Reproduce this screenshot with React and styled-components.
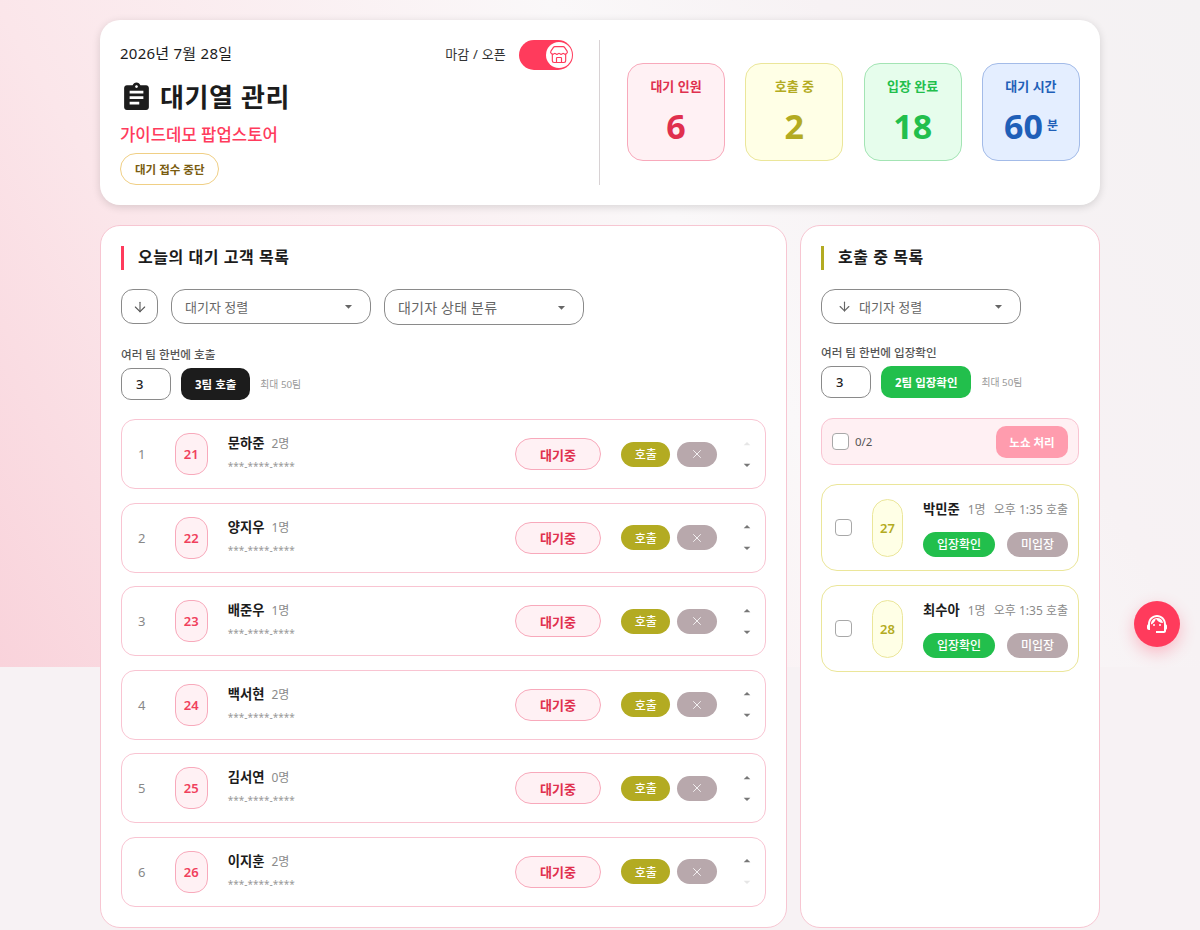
import React from "react";
import styled, { createGlobalStyle } from "styled-components";
import { ArrowDown, Store, X } from "lucide-react";
import {
  MdArrowDropDown,
  MdArrowDropUp,
  MdAssignment,
  MdSupportAgent,
} from "react-icons/md";

const tones = {
  red: { fg: "#e0304e", bg: "#fff1f4", line: "#f8a9bb" },
  yellow: { fg: "#b3ab22", bg: "#ffffe6", line: "#ebe69a" },
  green: { fg: "#22bf4c", bg: "#e6fdec", line: "#a3e4b4" },
  blue: { fg: "#1f5fb8", bg: "#e4eeff", line: "#a3bbe8" },
};

const waiting = [
  { no: 21, name: "문하준", count: 2 },
  { no: 22, name: "양지우", count: 1 },
  { no: 23, name: "배준우", count: 1 },
  { no: 24, name: "백서현", count: 2 },
  { no: 25, name: "김서연", count: 0 },
  { no: 26, name: "이지훈", count: 2 },
];

const calling = [
  { no: 27, name: "박민준", count: 1 },
  { no: 28, name: "최수아", count: 1 },
];

const GlobalStyle = createGlobalStyle`
  * {
    box-sizing: border-box;
  }
  body {
    margin: 0;
    font-family: "Noto Sans", "Noto Sans CJK KR", sans-serif;
    color: #1c1c1c;
    background:
      linear-gradient(60deg, #f9d3db 0%, #fbe6ea 24%, #faf8f9 59%, #f7f2f4 76%, #f4f2f3 100%) 0 0 / 100% 667px no-repeat,
      #f7f2f4;
  }
`;

const Page = styled.div`
  width: 1000px;
  margin: 0 auto;
  padding: 20px 0 3px;
  display: flex;
  flex-direction: column;
  gap: 20px;
`;

const Header = styled.header`
  height: 185px;
  padding: 20px;
  display: flex;
  background: #fff;
  border-radius: 20px;
  box-shadow: 0 2px 8px rgba(0, 0, 0, 0.14);
`;

const HeaderInfo = styled.div`
  width: 480px;
  padding-right: 26px;
  border-right: 1px solid #d8d2d4;
  display: flex;
  flex-direction: column;
  align-items: flex-start;
`;

const TopLine = styled.div`
  width: 100%;
  height: 30px;
  display: flex;
  align-items: center;
  justify-content: space-between;
`;

const DateText = styled.div`
  margin-bottom: 6px;
  font-size: 15px;
  letter-spacing: 0.25px;
`;

const ToggleWrap = styled.div`
  display: flex;
  align-items: center;
  gap: 13px;
  font-size: 13px;
  color: #333;
`;

const ToggleLabel = styled.span`
  margin-bottom: 4px;
  letter-spacing: 0.2px;
`;

const Toggle = styled.div`
  width: 54px;
  height: 30px;
  padding: 2px 1px;
  display: flex;
  justify-content: flex-end;
  background: #ff3b5c;
  border-radius: 15px;
`;

const Knob = styled.div`
  width: 26px;
  height: 26px;
  display: flex;
  align-items: center;
  justify-content: center;
  background: #fff;
  border-radius: 50%;
  color: #ff3b5c;
`;

const Title = styled.h1`
  margin: 8px 0 0;
  display: flex;
  align-items: center;
  gap: 7px;
  font-size: 26px;
  line-height: 38px;
  font-weight: 700;
  letter-spacing: 0.6px;
`;

const StoreName = styled.div`
  margin-top: 6px;
  font-size: 16.7px;
  line-height: 26px;
  font-weight: 500;
  color: #ff3b5c;
`;

const StopButton = styled.button`
  margin-top: 5px;
  height: 32px;
  padding: 0 14px;
  font: inherit;
  font-size: 11.5px;
  font-weight: 700;
  color: #7a5c10;
  background: #fff;
  border: 1px solid #f0cf85;
  border-radius: 16px;
`;

const Stats = styled.div`
  flex: 1;
  padding: 0 0 1px 27px;
  display: flex;
  align-items: center;
  justify-content: space-between;
`;

const StatCard = styled.div`
  width: 98px;
  height: 98px;
  padding-top: 12px;
  display: flex;
  flex-direction: column;
  align-items: center;
  background: ${(p) => tones[p.$tone].bg};
  border: 1px solid ${(p) => tones[p.$tone].line};
  border-radius: 16px;
  color: ${(p) => tones[p.$tone].fg};
`;

const StatLabel = styled.div`
  font-size: 13px;
  line-height: 20px;
  font-weight: 600;
`;

const StatValue = styled.div`
  margin-top: 8px;
  font-size: 34px;
  line-height: 44px;
  font-weight: 700;
  display: flex;
  align-items: center;
  gap: 4px;
`;

const Unit = styled.span`
  font-size: 12px;
  font-weight: 600;
`;

const Columns = styled.div`
  display: grid;
  grid-template-columns: 687px 300px;
  gap: 13px;
`;

const Panel = styled.section`
  height: 703px;
  padding: 20px;
  background: #fff;
  border: 1px solid #f7c6d2;
  border-radius: 20px;
`;

const PanelTitle = styled.h2`
  margin: 0;
  height: 24px;
  padding-left: 14px;
  border-left: 3px solid ${(p) => (p.$tone === "yellow" ? "#b3ab22" : "#ff3b5c")};
  font-size: 16px;
  line-height: 23px;
  font-weight: 600;
  letter-spacing: 0.55px;
`;

const Filters = styled.div`
  margin-top: 19px;
  display: flex;
  gap: 13px;
  align-items: flex-start;
`;

const RoundButton = styled.div`
  width: 37px;
  height: 35px;
  display: flex;
  align-items: center;
  justify-content: center;
  border: 1px solid #8a8a8a;
  border-radius: 12px;
  color: #555;
`;

const Select = styled.div`
  width: 200px;
  height: ${(p) => (p.$tall ? "36px" : "35px")};
  padding: 0 13px 0 ${(p) => (p.$icon ? "15px" : "13px")};
  display: flex;
  align-items: center;
  gap: 7px;
  border: 1px solid #8a8a8a;
  border-radius: 14px;
  font-size: ${(p) => (p.$tall ? "14px" : "13px")};
  letter-spacing: ${(p) => (p.$tall ? "0.2px" : "0")};
  color: #666;
  svg:last-child {
    margin-left: auto;
  }
`;

const BulkLabel = styled.div`
  margin-top: ${(p) => p.$top};
  font-size: 11.6px;
  line-height: 16px;
  font-weight: 500;
  color: #555;
`;

const BulkRow = styled.div`
  margin-top: 5px;
  display: flex;
  align-items: center;
  gap: 10px;
`;

const CountInput = styled.input`
  width: 50px;
  height: 32px;
  padding: 0 14px;
  font: inherit;
  font-size: 13px;
  font-weight: 500;
  color: #222;
  border: 1px solid #8a8a8a;
  border-radius: 10px;
`;

const BulkButton = styled.button`
  height: 32px;
  padding: 0 14px;
  font: inherit;
  font-size: 11.5px;
  font-weight: 700;
  color: #fff;
  background: ${(p) => (p.$green ? "#22bf4c" : "#1c1c1c")};
  border: 0;
  border-radius: 10px;
`;

const MaxText = styled.span`
  font-size: 9.8px;
  color: #999;
`;

const QueueList = styled.div`
  margin-top: 19px;
  display: flex;
  flex-direction: column;
  gap: 13.5px;
`;

const QueueRow = styled.div`
  height: 70px;
  padding: 0 8px 0 16px;
  display: flex;
  align-items: center;
  background: #fff;
  border: 1px solid #f9c4d2;
  border-radius: 14px;
`;

const RowIndex = styled.div`
  width: 37px;
  font-size: 13px;
  color: #888;
`;

const TeamBadge = styled.div`
  flex: none;
  width: ${(p) => p.$w};
  height: ${(p) => p.$h};
  margin-left: ${(p) => p.$left || 0};
  display: flex;
  align-items: center;
  justify-content: center;
  font-size: 13px;
  font-weight: 600;
  color: ${(p) => (p.$tone === "red" ? "#f0405c" : tones[p.$tone].fg)};
  background: ${(p) => tones[p.$tone].bg};
  border: 1px solid ${(p) => tones[p.$tone].line};
  border-radius: ${(p) => p.$radius};
`;

const Person = styled.div`
  margin-left: 20px;
  width: 289px;
  padding-bottom: 2px;
`;

const NameLine = styled.div`
  display: flex;
  align-items: baseline;
  gap: 7px;
`;

const Name = styled.span`
  font-size: 13.3px;
  line-height: 20px;
  font-weight: 600;
`;

const Muted = styled.span`
  font-size: 12px;
  color: #8a8a8a;
`;

const Phone = styled.div`
  margin-top: 6px;
  font-size: 10px;
  line-height: 14px;
  color: #999;
`;

const StatusPill = styled.div`
  width: 87px;
  height: 32px;
  display: flex;
  align-items: center;
  justify-content: center;
  font-size: 13px;
  font-weight: 600;
  color: #e0304e;
  background: #fff1f4;
  border: 1px solid #f8a9bb;
  border-radius: 16px;
`;

const ActionPill = styled.button`
  width: ${(p) => p.$w};
  height: 25px;
  margin-left: ${(p) => p.$left || 0};
  padding: 0;
  display: flex;
  align-items: center;
  justify-content: center;
  font: inherit;
  font-size: 12px;
  font-weight: 500;
  color: #fff;
  background: ${(p) => p.$bg};
  border: 0;
  border-radius: 13px;
`;

const Arrows = styled.div`
  margin-left: 20px;
  width: 20px;
  display: flex;
  flex-direction: column;
  align-items: center;
  gap: 5px;
`;

const ArrowUp = styled(MdArrowDropUp)`
  color: ${(p) => (p.$off ? "#e6e6e6" : "#777")};
`;

const ArrowDownIcon = styled(MdArrowDropDown)`
  color: ${(p) => (p.$off ? "#e6e6e6" : "#777")};
`;

const NoShowBar = styled.div`
  margin-top: 20px;
  height: 47px;
  padding: 0 10px;
  display: flex;
  align-items: center;
  background: #fff0f3;
  border: 1px solid #f9c4d2;
  border-radius: 12px;
  font-size: 11.5px;
  color: #555;
`;

const Check = styled.input.attrs({ type: "checkbox" })`
  appearance: none;
  flex: none;
  width: 17px;
  height: 17px;
  margin: 0;
  background: #fff;
  border: 1px solid #a8a8a8;
  border-radius: 4px;
`;

const BarCount = styled.span`
  margin-left: 6px;
`;

const NoShowButton = styled.button`
  margin-left: auto;
  width: 72px;
  height: 32px;
  padding: 0;
  font: inherit;
  font-size: 11.5px;
  font-weight: 600;
  color: #fff;
  background: #ff9cae;
  border: 0;
  border-radius: 10px;
`;

const CallList = styled.div`
  margin-top: 19px;
  display: flex;
  flex-direction: column;
  gap: 14px;
`;

const CallCard = styled.div`
  height: 87px;
  padding: 0 10px 0 13px;
  display: flex;
  align-items: center;
  border: 1px solid #ebe69a;
  border-radius: 16px;
  background: #fff;
`;

const CallBody = styled.div`
  margin-left: 20px;
  flex: 1;
`;

const CallLine = styled.div`
  display: flex;
  align-items: baseline;
  gap: 8px;
`;

const CallTime = styled(Muted)`
  margin-left: auto;
  white-space: nowrap;
`;

const CallActions = styled.div`
  margin-top: 13px;
  display: flex;
  justify-content: space-between;
`;

const Fab = styled.button`
  position: fixed;
  left: 1134px;
  top: 601px;
  width: 46px;
  height: 46px;
  padding: 0;
  display: flex;
  align-items: center;
  justify-content: center;
  color: #fff;
  background: #ff3b5c;
  border: 0;
  border-radius: 50%;
  box-shadow: 0 6px 16px rgba(255, 59, 92, 0.3);
`;

export default function App() {
  return (
    <>
      <GlobalStyle />
      <Page>
        <Header>
          <HeaderInfo>
            <TopLine>
              <DateText>2026년 7월 28일</DateText>
              <ToggleWrap>
                <ToggleLabel>마감 / 오픈</ToggleLabel>
                <Toggle>
                  <Knob>
                    <Store size={20} strokeWidth={1.4} />
                  </Knob>
                </Toggle>
              </ToggleWrap>
            </TopLine>
            <Title>
              <MdAssignment size={33} />
              대기열 관리
            </Title>
            <StoreName>가이드데모 팝업스토어</StoreName>
            <StopButton>대기 접수 중단</StopButton>
          </HeaderInfo>
          <Stats>
            <StatCard $tone="red">
              <StatLabel>대기 인원</StatLabel>
              <StatValue>6</StatValue>
            </StatCard>
            <StatCard $tone="yellow">
              <StatLabel>호출 중</StatLabel>
              <StatValue>2</StatValue>
            </StatCard>
            <StatCard $tone="green">
              <StatLabel>입장 완료</StatLabel>
              <StatValue>18</StatValue>
            </StatCard>
            <StatCard $tone="blue">
              <StatLabel>대기 시간</StatLabel>
              <StatValue>
                60<Unit>분</Unit>
              </StatValue>
            </StatCard>
          </Stats>
        </Header>

        <Columns>
          <Panel>
            <PanelTitle>오늘의 대기 고객 목록</PanelTitle>
            <Filters>
              <RoundButton>
                <ArrowDown size={16} strokeWidth={1.6} />
              </RoundButton>
              <Select>
                대기자 정렬
                <MdArrowDropDown size={17} />
              </Select>
              <Select $tall>
                대기자 상태 분류
                <MdArrowDropDown size={17} />
              </Select>
            </Filters>
            <BulkLabel $top="22px">여러 팀 한번에 호출</BulkLabel>
            <BulkRow>
              <CountInput readOnly value="3" />
              <BulkButton>3팀 호출</BulkButton>
              <MaxText>최대 50팀</MaxText>
            </BulkRow>
            <QueueList>
              {waiting.map((item, i) => (
                <QueueRow key={item.no}>
                  <RowIndex>{i + 1}</RowIndex>
                  <TeamBadge $tone="red" $w="33px" $h="42px" $radius="14px">
                    {item.no}
                  </TeamBadge>
                  <Person>
                    <NameLine>
                      <Name>{item.name}</Name>
                      <Muted>{item.count}명</Muted>
                    </NameLine>
                    <Phone>***-****-****</Phone>
                  </Person>
                  <StatusPill>대기중</StatusPill>
                  <ActionPill $w="49.5px" $bg="#b3ab22" $left="20px">
                    호출
                  </ActionPill>
                  <ActionPill $w="40px" $bg="#b8a8ac" $left="7px">
                    <X size={14} strokeWidth={1.4} />
                  </ActionPill>
                  <Arrows>
                    <ArrowUp size={16} $off={i === 0} />
                    <ArrowDownIcon size={16} $off={i === waiting.length - 1} />
                  </Arrows>
                </QueueRow>
              ))}
            </QueueList>
          </Panel>

          <Panel>
            <PanelTitle $tone="yellow">호출 중 목록</PanelTitle>
            <Filters>
              <Select $icon>
                <ArrowDown size={15} strokeWidth={1.8} />
                대기자 정렬
                <MdArrowDropDown size={17} />
              </Select>
            </Filters>
            <BulkLabel $top="21px">여러 팀 한번에 입장확인</BulkLabel>
            <BulkRow>
              <CountInput readOnly value="3" />
              <BulkButton $green>2팀 입장확인</BulkButton>
              <MaxText>최대 50팀</MaxText>
            </BulkRow>
            <NoShowBar>
              <Check />
              <BarCount>0/2</BarCount>
              <NoShowButton>노쇼 처리</NoShowButton>
            </NoShowBar>
            <CallList>
              {calling.map((item) => (
                <CallCard key={item.no}>
                  <Check />
                  <TeamBadge $tone="yellow" $w="31px" $h="58px" $left="20px" $radius="16px">
                    {item.no}
                  </TeamBadge>
                  <CallBody>
                    <CallLine>
                      <Name>{item.name}</Name>
                      <Muted>{item.count}명</Muted>
                      <CallTime>오후 1:35 호출</CallTime>
                    </CallLine>
                    <CallActions>
                      <ActionPill $w="72px" $bg="#22bf4c">
                        입장확인
                      </ActionPill>
                      <ActionPill $w="61px" $bg="#b8a8ac">
                        미입장
                      </ActionPill>
                    </CallActions>
                  </CallBody>
                </CallCard>
              ))}
            </CallList>
          </Panel>
        </Columns>
        <Fab>
          <MdSupportAgent size={24} />
        </Fab>
      </Page>
    </>
  );
}
